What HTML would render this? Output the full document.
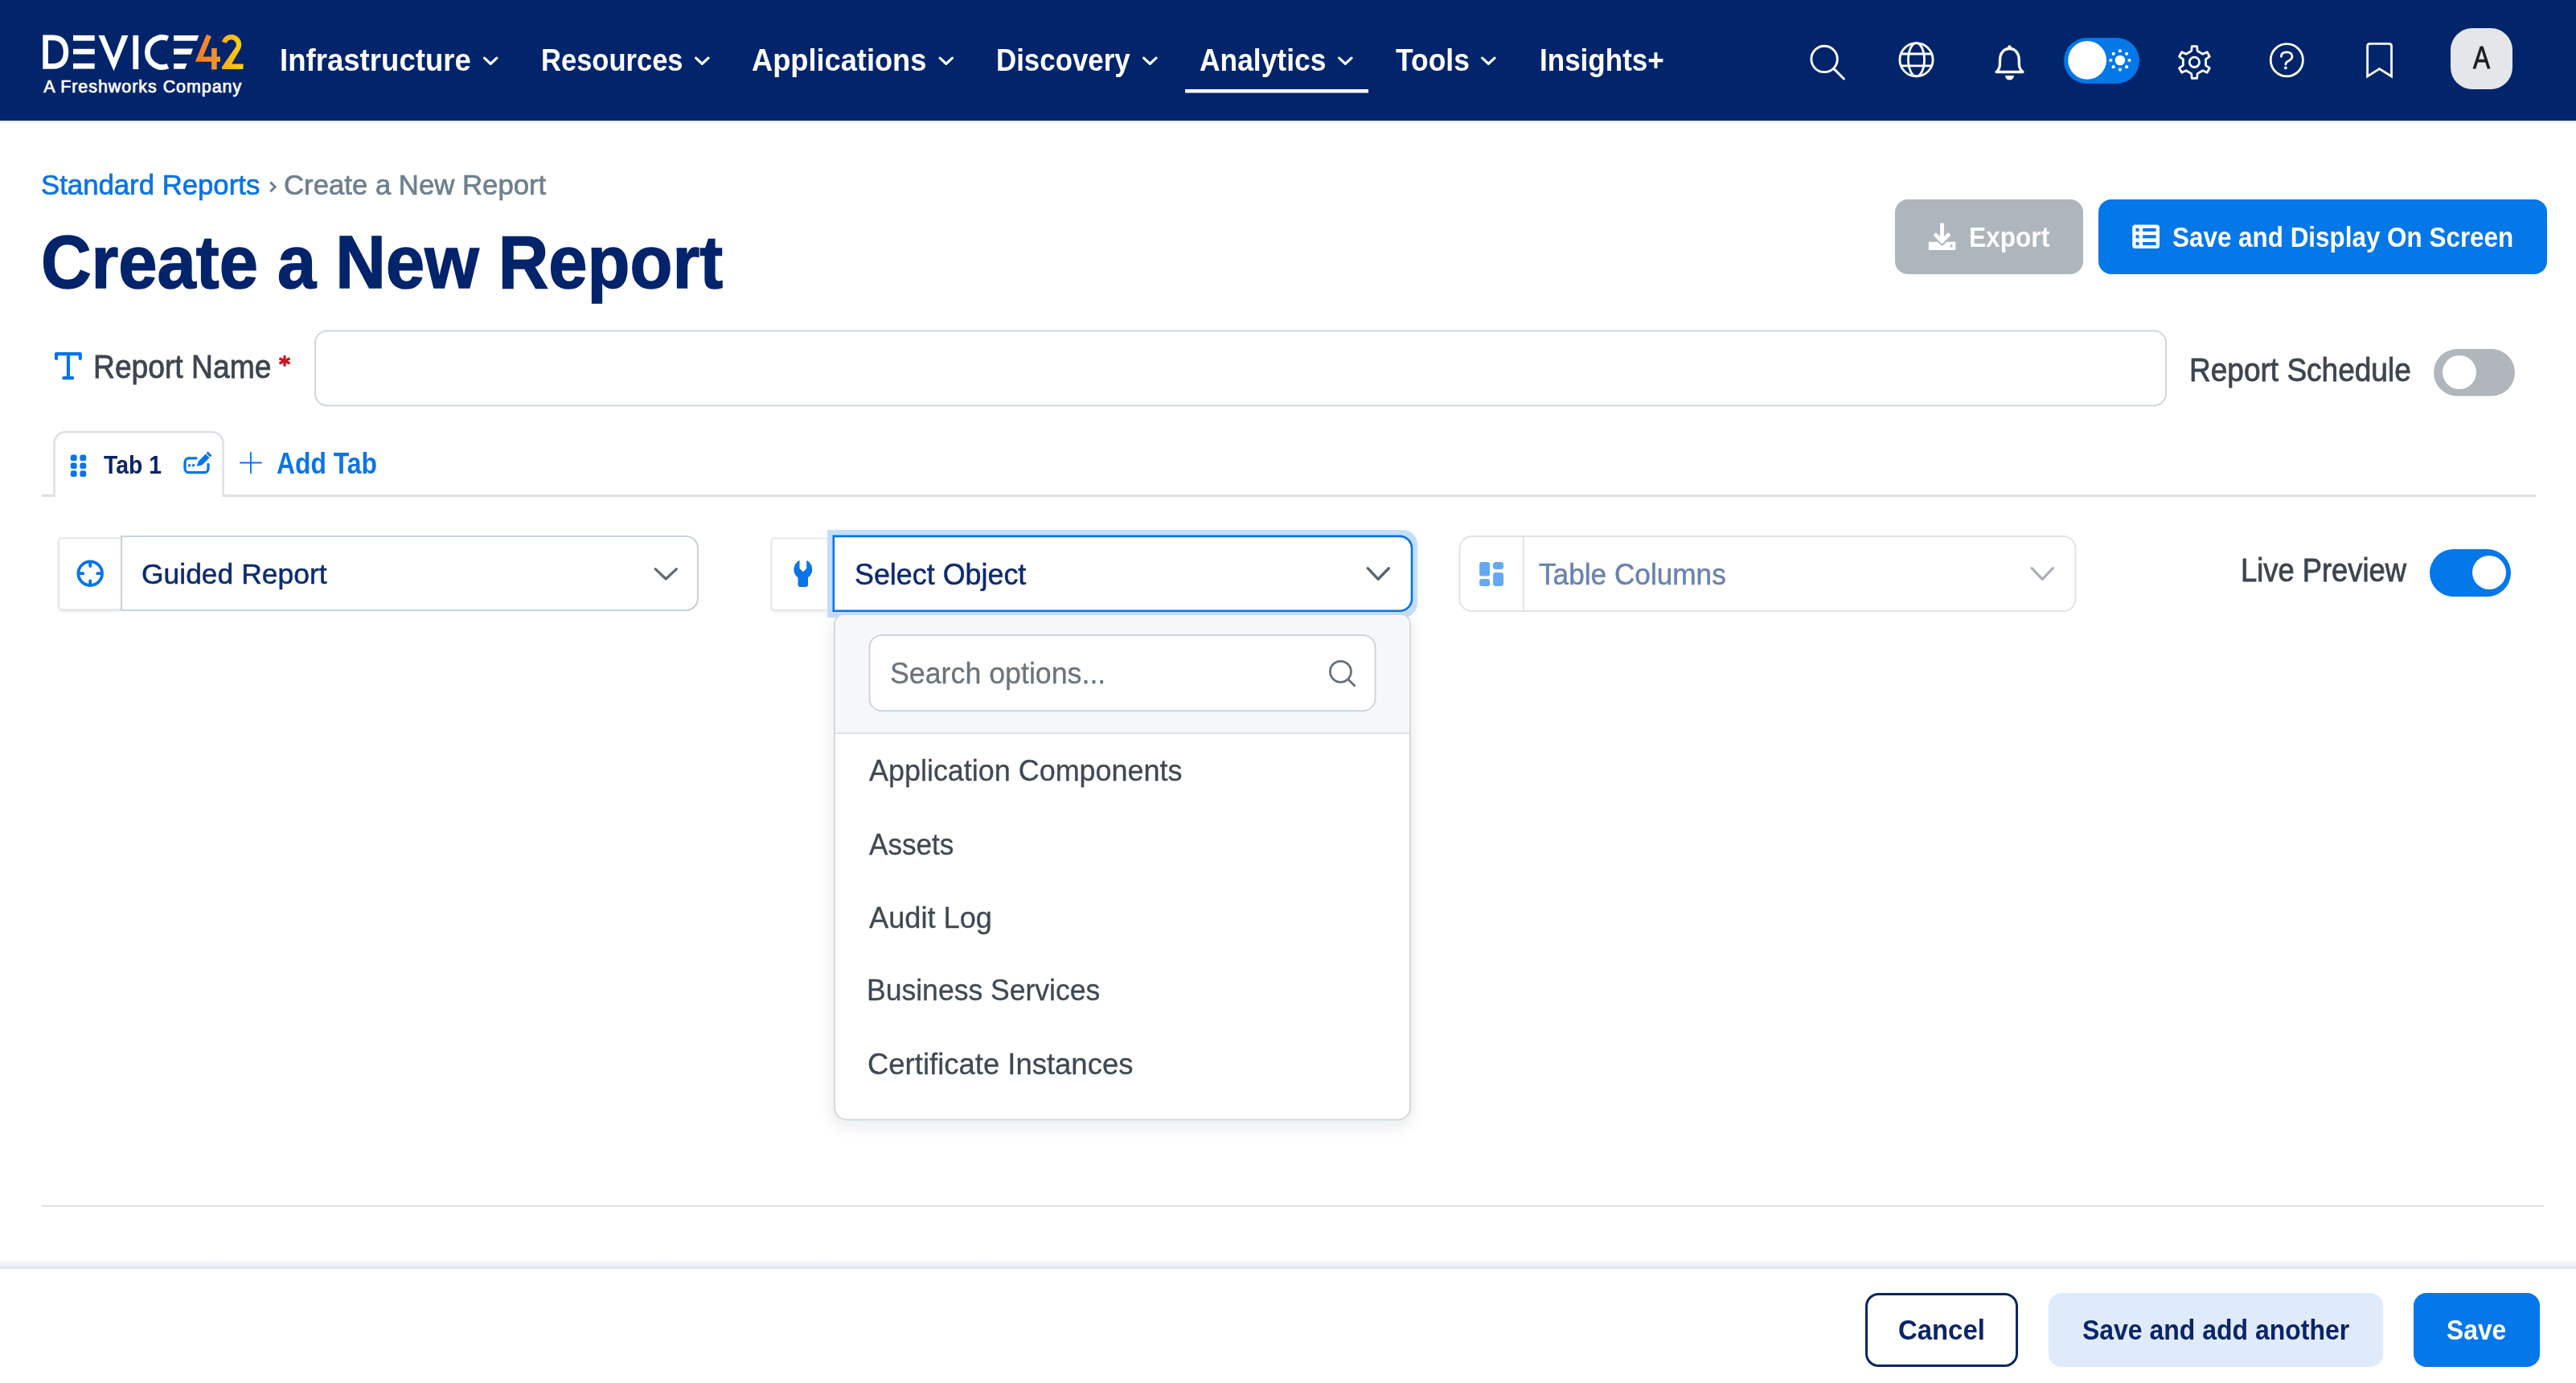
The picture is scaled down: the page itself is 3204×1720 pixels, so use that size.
<!DOCTYPE html>
<html><head><meta charset="utf-8"><title>Create a New Report</title>
<style>
html,body{margin:0;padding:0;background:#fff;width:3204px;height:1720px;overflow:hidden;}
.t{position:absolute;white-space:nowrap;line-height:normal;font-family:"Liberation Sans",sans-serif;transform-origin:0 0;}
svg{position:absolute;left:0;top:0;}
</style></head><body>
<svg width="3204" height="1720" viewBox="0 0 3204 1720">
<rect x="0" y="0" width="3204" height="150" fill="#01246b"/>
<rect x="0" y="150" width="3204" height="2" fill="#e3e6ea"/>
<defs><linearGradient id="g42" x1="242" y1="0" x2="303" y2="0" gradientUnits="userSpaceOnUse"><stop offset="0" stop-color="#f07a2c"/><stop offset="0.45" stop-color="#f4922a"/><stop offset="0.6" stop-color="#fbb01a"/><stop offset="1" stop-color="#ffd10a"/></linearGradient></defs>
<path fill="#fff" fill-rule="evenodd" d="M53.3,43.5 H66.4 C78.5,43.5 85.3,52 85.3,64.65 C85.3,77.3 78.5,85.8 66.4,85.8 H53.3 Z M59.9,50.3 H66.4 C74.3,50.3 78.8,56 78.8,64.65 C78.8,73.3 74.3,79 66.4,79 H59.9 Z"/>
<rect x="91" y="43.9" width="26.7" height="6.8" fill="#fff"/><rect x="91" y="60.8" width="26.7" height="6.7" fill="#fff"/><rect x="91" y="78.8" width="26.7" height="6.8" fill="#fff"/>
<polygon fill="#fff" points="122.4,43.9 129.8,43.9 141.5,72 151.7,43.9 159.5,43.9 141.5,88.2"/>
<rect x="165.4" y="43.9" width="6.8" height="42.2" fill="#fff"/>
<path fill="none" stroke="#fff" stroke-width="6.8" d="M208.83,47.85 A18.5,18.5 0 1 0 208.83,82.15"/>
<polygon fill="#fff" points="216,43.9 247.3,43.9 244.8,50.7 216,50.7"/><polygon fill="#fff" points="216,60.6 240,60.6 237.5,67.7 216,67.7"/><polygon fill="#fff" points="216,79 232.6,79 230,85.8 216,85.8"/>
<path fill="url(#g42)" d="M256.9,42.7 L262.9,45.2 L252.6,70.4 L263.1,70.4 L263.1,60.1 L269.7,60.1 L269.7,70.4 L274,70.4 L274,76.7 L269.7,76.7 L269.7,86.6 L263.1,86.6 L263.1,76.7 L242.8,76.7 Z"/>
<path fill="url(#g42)" d="M275.75,51.85 A12.5,12.5 0 1 1 297.94,62.67 L288.1,79.6 L302.5,79.6 L302.5,86 L276,86 L276,83.2 L292.78,59.06 A6.2,6.2 0 1 0 281.77,53.69 Z"/>
<polyline points="602.5,72.1 610.2,79.4 617.9,72.1" fill="none" stroke="#fff" stroke-width="3.2" stroke-linecap="round" stroke-linejoin="round"/>
<polyline points="865.6,72.1 873.3,79.4 881.0,72.1" fill="none" stroke="#fff" stroke-width="3.2" stroke-linecap="round" stroke-linejoin="round"/>
<polyline points="1169.1,72.1 1176.8,79.4 1184.5,72.1" fill="none" stroke="#fff" stroke-width="3.2" stroke-linecap="round" stroke-linejoin="round"/>
<polyline points="1422.6,72.1 1430.3,79.4 1438.0,72.1" fill="none" stroke="#fff" stroke-width="3.2" stroke-linecap="round" stroke-linejoin="round"/>
<polyline points="1665.6,72.1 1673.3,79.4 1681.0,72.1" fill="none" stroke="#fff" stroke-width="3.2" stroke-linecap="round" stroke-linejoin="round"/>
<polyline points="1843.6,72.1 1851.3,79.4 1859.0,72.1" fill="none" stroke="#fff" stroke-width="3.2" stroke-linecap="round" stroke-linejoin="round"/>
<rect x="1474" y="111" width="228" height="4.5" fill="#fff"/>
<circle cx="2269.1" cy="73.45" r="16.2" fill="none" stroke="#fff" stroke-width="2.9"/><line x1="2281" y1="85.6" x2="2293.4" y2="98" stroke="#fff" stroke-width="2.9" stroke-linecap="round"/>
<g fill="none" stroke="#fff" stroke-width="2.8"><circle cx="2383.5" cy="74.3" r="20.6"/><ellipse cx="2383.5" cy="74.3" rx="10" ry="20.6"/><line x1="2364" y1="67" x2="2403" y2="67"/><line x1="2364" y1="81.8" x2="2403" y2="81.8"/></g>
<path fill="none" stroke="#fff" stroke-width="3.3" stroke-linejoin="round" d="M2483,89.5 C2487.5,85.5 2487.5,82 2487.5,77 V75 C2487.5,66 2492.5,60.5 2499.4,60.5 C2506.3,60.5 2511.3,66 2511.3,75 V77 C2511.3,82 2511.3,85.5 2516,89.5 Z"/>
<path fill="#fff" d="M2494,94 H2505 A5.5,5.5 0 0 1 2494,94 Z"/><circle cx="2499.4" cy="58.5" r="2.3" fill="#fff"/>
<rect x="2567" y="47" width="94" height="57" rx="28.5" fill="#0477e9"/><circle cx="2596.1" cy="74.9" r="23.9" fill="#fff"/>
<circle cx="2636.9" cy="75" r="6.3" fill="#fff"/>
<circle cx="2648.50" cy="75.00" r="2.1" fill="#fff"/>
<circle cx="2645.10" cy="83.20" r="2.1" fill="#fff"/>
<circle cx="2636.90" cy="86.60" r="2.1" fill="#fff"/>
<circle cx="2628.70" cy="83.20" r="2.1" fill="#fff"/>
<circle cx="2625.30" cy="75.00" r="2.1" fill="#fff"/>
<circle cx="2628.70" cy="66.80" r="2.1" fill="#fff"/>
<circle cx="2636.90" cy="63.40" r="2.1" fill="#fff"/>
<circle cx="2645.10" cy="66.80" r="2.1" fill="#fff"/>
<path fill="none" stroke="#fff" stroke-width="2.8" stroke-linejoin="round" d="M2725.62,63.40 L2726.24,57.55 L2732.56,57.55 L2733.18,63.40 L2739.72,67.18 L2745.10,64.79 L2748.26,70.26 L2743.50,73.72 L2743.50,81.28 L2748.26,84.74 L2745.10,90.21 L2739.72,87.82 L2733.18,91.60 L2732.56,97.45 L2726.24,97.45 L2725.62,91.60 L2719.08,87.82 L2713.70,90.21 L2710.54,84.74 L2715.30,81.28 L2715.30,73.72 L2710.54,70.26 L2713.70,64.79 L2719.08,67.18 Z"/><circle cx="2729.4" cy="77.3" r="6.2" fill="none" stroke="#fff" stroke-width="2.8"/>
<circle cx="2844.3" cy="74.7" r="20.1" fill="none" stroke="#fff" stroke-width="2.8"/>
<path fill="none" stroke="#fff" stroke-width="2.8" stroke-linecap="round" d="M2837.3,70.3 C2837.3,66.5 2840.5,64.8 2844.3,64.8 C2848.3,64.8 2851,67 2851,70.3 C2851,73.5 2848.5,74.8 2846,76 C2843.8,77.2 2842.8,78.2 2842.8,80"/><circle cx="2842.8" cy="84.4" r="1.9" fill="#fff"/>
<path fill="none" stroke="#fff" stroke-width="2.8" stroke-linejoin="miter" d="M2944.6,95 V57.5 Q2944.6,54.4 2947.7,54.4 H2971.4 Q2974.5,54.4 2974.5,57.5 V95 L2959.5,85.6 Z"/>
<rect x="3048" y="35" width="77" height="76" rx="27" fill="#e4e6ea"/>
<polyline points="336.3,226.6 342.2,232.45 336.3,238.3" fill="none" stroke="#6e808f" stroke-width="3"/>
<rect x="2357" y="248" width="234" height="93" rx="16" fill="#adb6bd"/>
<g fill="#fff"><rect x="2413.1" y="277.5" width="4.8" height="21"/><polyline points="2406.2,290.8 2415.5,300.1 2424.8,290.8" fill="none" stroke="#fff" stroke-width="4.8" stroke-linejoin="miter"/><path d="M2398.8,300.7 H2409.8 L2415.5,306.1 L2421.2,300.7 H2432.3 V311.1 H2398.8 Z"/></g><circle cx="2427.1" cy="305.9" r="1.6" fill="#adb6bd"/>
<rect x="2610" y="248" width="558" height="93" rx="16" fill="#0477e9"/>
<rect x="2652.2" y="279.5" width="33.8" height="29.6" rx="3.5" fill="#fff"/>
<rect x="2656.5" y="283.8" width="4" height="4.1" fill="#0477e9"/><rect x="2665.1" y="283.8" width="16.5" height="4.1" fill="#0477e9"/>
<rect x="2656.5" y="292.3" width="4" height="4.1" fill="#0477e9"/><rect x="2665.1" y="292.3" width="16.5" height="4.1" fill="#0477e9"/>
<rect x="2656.5" y="301" width="4" height="4.1" fill="#0477e9"/><rect x="2665.1" y="301" width="16.5" height="4.1" fill="#0477e9"/>
<path fill="none" stroke="#0a74e8" stroke-width="4.2" stroke-linecap="round" stroke-linejoin="round" d="M70,446 V440.2 H99.8 V446 M85,440.2 V470.2 M79.3,470.2 H90.2"/>
<g stroke="#cf1020" stroke-width="3.2" stroke-linecap="butt"><line x1="354" y1="442.1" x2="354" y2="455.7"/><line x1="347.5" y1="445.8" x2="360.5" y2="452"/><line x1="347.5" y1="452" x2="360.5" y2="445.8"/></g>
<rect x="392" y="411.5" width="2302" height="93" rx="15" fill="#fff" stroke="#cfd6dd" stroke-width="2"/>
<rect x="3027" y="434" width="101" height="58.5" rx="29.25" fill="#b1b6bc"/><circle cx="3059" cy="463" r="21" fill="#fff"/>
<rect x="52" y="615" width="3102" height="3" fill="#dce0e5"/>
<path fill="#fff" stroke="#dde1e6" stroke-width="2.6" d="M67.5,618 V551 A14,14 0 0 1 81.5,537.3 H263.5 A14,14 0 0 1 277.5,551 V618"/>
<rect x="87.8" y="565.6" width="7.8" height="7.6" rx="2.5" fill="#0a74e8"/>
<rect x="87.8" y="575.5" width="7.8" height="7.6" rx="2.5" fill="#0a74e8"/>
<rect x="87.8" y="585.3" width="7.8" height="7.6" rx="2.5" fill="#0a74e8"/>
<rect x="99.4" y="565.6" width="7.8" height="7.6" rx="2.5" fill="#0a74e8"/>
<rect x="99.4" y="575.5" width="7.8" height="7.6" rx="2.5" fill="#0a74e8"/>
<rect x="99.4" y="585.3" width="7.8" height="7.6" rx="2.5" fill="#0a74e8"/>
<path fill="none" stroke="#0a74e8" stroke-width="3.3" stroke-linecap="round" d="M244,569.9 H235 A5,5 0 0 0 230,574.9 V582.7 A5,5 0 0 0 235,587.7 H254 A5,5 0 0 0 259,582.7 V577.5"/>
<circle cx="235.6" cy="578.8" r="1.7" fill="#0a74e8"/><circle cx="240.6" cy="578.8" r="1.7" fill="#0a74e8"/>
<path fill="#0a74e8" d="M244.5,580 L247,573.5 L258.7,561.5 L263.5,566.5 L251.5,578.3 Z"/><line x1="255.6" y1="563.6" x2="261.4" y2="569.4" stroke="#fff" stroke-width="1.3"/>
<g stroke="#0a74e8" stroke-width="1.9" stroke-linecap="round"><line x1="311.9" y1="563" x2="311.9" y2="588"/><line x1="299" y1="575.5" x2="325" y2="575.5"/></g>
<defs><filter id="sh" x="-20%" y="-20%" width="140%" height="150%"><feDropShadow dx="0" dy="1.5" stdDeviation="1.5" flood-color="#000" flood-opacity="0.12"/></filter><filter id="sh2" x="-10%" y="-10%" width="120%" height="120%"><feDropShadow dx="0" dy="6" stdDeviation="9" flood-color="#1b2a3c" flood-opacity="0.10"/></filter></defs>
<rect x="73" y="669" width="78" height="89" rx="4" fill="#fff" stroke="#dfe3e8" stroke-width="1.6" filter="url(#sh)"/>
<path fill="#fff" stroke="#cbd3dc" stroke-width="2.2" d="M151,667 H853 A15,15 0 0 1 868,682 V744 A15,15 0 0 1 853,759 H151 Z"/>
<g fill="none" stroke="#0a74e8" stroke-width="3.8" stroke-linecap="round"><circle cx="112.2" cy="713.2" r="14.8"/><line x1="112.2" y1="699" x2="112.2" y2="704"/><line x1="112.2" y1="722.4" x2="112.2" y2="727.4"/><line x1="98" y1="713.2" x2="103.3" y2="713.2"/><line x1="121.2" y1="713.2" x2="126.4" y2="713.2"/></g>
<polyline points="815.1,707.6 828.2,720.0 841.4,707.6" fill="none" stroke="#5f6b76" stroke-width="3.2" stroke-linecap="round" stroke-linejoin="round"/>
<rect x="959.5" y="669.5" width="72" height="89" rx="4" fill="#fff" stroke="#dfe3e8" stroke-width="1.6" filter="url(#sh)"/>
<path fill="#c4defc" d="M1029,659 H1745 A18,18 0 0 1 1763,677 V750 A18,18 0 0 1 1745,768 H1029 Z"/>
<path fill="#fff" stroke="#0a73e6" stroke-width="2.6" d="M1036.8,666.9 H1741 A15,15 0 0 1 1756,681.9 V744.7 A15,15 0 0 1 1741,759.7 H1036.8 Z"/>
<path fill="#0a74e8" d="M994.5,696.8 V707 L998.9,711.2 L1003.2,707 V696.8 A12.8,12.8 0 0 1 1005,718.5 V727 A3,3 0 0 1 1002,730 H995.5 A3,3 0 0 1 992.5,727 V718.5 A12.8,12.8 0 0 1 994.5,696.8 Z"/>
<polyline points="1701.2,706.7 1714.2,720.3 1727.3,706.7" fill="none" stroke="#5a6570" stroke-width="3.4" stroke-linecap="round" stroke-linejoin="round"/>
<rect x="1815.5" y="667" width="766" height="93" rx="15" fill="#fff" stroke="#dfe3e8" stroke-width="2"/><rect x="1894" y="668" width="2" height="91" fill="#e3e7eb"/>
<g fill="#64a9f0"><rect x="1840.1" y="699" width="13" height="17.6" rx="3.2"/><rect x="1857.1" y="699" width="12.9" height="8.9" rx="3.2"/><rect x="1840.1" y="720" width="13" height="8.9" rx="3.2"/><rect x="1857.1" y="712" width="12.9" height="16.9" rx="3.2"/></g>
<polyline points="2527.1,706.6 2540.2,720.4 2553.4,706.6" fill="none" stroke="#a9b0b7" stroke-width="3.2" stroke-linecap="round" stroke-linejoin="round"/>
<rect x="3022" y="683" width="101" height="59" rx="29.5" fill="#0477e9"/><circle cx="3096" cy="712" r="21" fill="#fff"/>
<path fill="#fff" stroke="#d3d9df" stroke-width="2" filter="url(#sh2)" d="M1038,776 A12,12 0 0 1 1050,764 H1742 A12,12 0 0 1 1754,776 V1377.5 A15,15 0 0 1 1739,1392.5 H1053 A15,15 0 0 1 1038,1377.5 Z"/>
<path fill="#f6f7f9" d="M1039,776 A11,11 0 0 1 1050,765 H1742 A11,11 0 0 1 1753,776 V911 H1039 Z"/><rect x="1039" y="911" width="714" height="2" fill="#dde1e6"/>
<rect x="1081.5" y="790" width="629" height="94" rx="15" fill="#fff" stroke="#cfd5dc" stroke-width="2"/>
<circle cx="1667.4" cy="835.3" r="13" fill="none" stroke="#65717d" stroke-width="2.8"/><line x1="1677" y1="845" x2="1685.5" y2="853.4" stroke="#65717d" stroke-width="2.8"/>
<rect x="52" y="1499" width="3112" height="2" fill="#dbdfe4"/>
<defs><linearGradient id="fsh" x1="0" y1="0" x2="0" y2="1"><stop offset="0" stop-color="#e6e9f0" stop-opacity="0"/><stop offset="0.5" stop-color="#eef0f5" stop-opacity="0.8"/><stop offset="1" stop-color="#dfe2ea" stop-opacity="1"/></linearGradient></defs>
<rect x="0" y="1566" width="3204" height="12" fill="url(#fsh)"/><rect x="0" y="1578" width="3204" height="142" fill="#fff"/>
<rect x="2321.5" y="1609.5" width="187" height="89" rx="15" fill="#fff" stroke="#0b2566" stroke-width="3"/>
<rect x="2548" y="1608" width="416" height="92" rx="16" fill="#dfeafb"/>
<rect x="3002" y="1608" width="157" height="92" rx="16" fill="#0477e9"/>
</svg>
<div class="t" style="left:347.57px;top:52.00px;font-size:39.27px;font-weight:700;color:#ffffff;transform:scaleX(0.9317);">Infrastructure</div>
<div class="t" style="left:672.80px;top:52.00px;font-size:39.27px;font-weight:700;color:#ffffff;transform:scaleX(0.8793);">Resources</div>
<div class="t" style="left:935.08px;top:52.00px;font-size:39.27px;font-weight:700;color:#ffffff;transform:scaleX(0.9227);">Applications</div>
<div class="t" style="left:1238.78px;top:52.00px;font-size:39.27px;font-weight:700;color:#ffffff;transform:scaleX(0.8877);">Discovery</div>
<div class="t" style="left:1492.10px;top:52.00px;font-size:39.27px;font-weight:700;color:#ffffff;transform:scaleX(0.9012);">Analytics</div>
<div class="t" style="left:1735.55px;top:52.00px;font-size:39.27px;font-weight:700;color:#ffffff;transform:scaleX(0.9023);">Tools</div>
<div class="t" style="left:1914.77px;top:52.00px;font-size:39.27px;font-weight:700;color:#ffffff;transform:scaleX(0.8922);">Insights+</div>
<div class="t" style="left:54.15px;top:95.70px;font-size:21.38px;font-weight:400;color:#ffffff;transform:scaleX(1.0000);-webkit-text-stroke:0.7px #ffffff;letter-spacing:1.008px;">A Freshworks Company</div>
<div class="t" style="left:3075.60px;top:50.10px;font-size:39.13px;font-weight:400;color:#1c1c1c;transform:scaleX(0.8074);-webkit-text-stroke:0.9px #1c1c1c;">A</div>
<div class="t" style="left:50.97px;top:210.00px;font-size:35.20px;font-weight:400;color:#0b73e6;transform:scaleX(0.9872);-webkit-text-stroke:0.7px #0b73e6;">Standard Reports</div>
<div class="t" style="left:353.44px;top:210.10px;font-size:35.64px;font-weight:400;color:#6e808f;transform:scaleX(0.9749);-webkit-text-stroke:0.7px #6e808f;">Create a New Report</div>
<div class="t" style="left:50.90px;top:273.10px;font-size:92.95px;font-weight:700;color:#03236b;transform:scaleX(0.9330);-webkit-text-stroke:1.5px #03236b;">Create a New Report</div>
<div class="t" style="left:2448.90px;top:274.90px;font-size:35.64px;font-weight:700;color:#ffffff;transform:scaleX(0.8878);">Export</div>
<div class="t" style="left:2702.12px;top:274.90px;font-size:35.64px;font-weight:700;color:#ffffff;transform:scaleX(0.8817);">Save and Display On Screen</div>
<div class="t" style="left:115.57px;top:432.90px;font-size:40.44px;font-weight:400;color:#3d4550;transform:scaleX(0.9208);-webkit-text-stroke:0.8px #3d4550;">Report Name</div>
<div class="t" style="left:2722.50px;top:437.00px;font-size:40.73px;font-weight:400;color:#3d4550;transform:scaleX(0.9091);-webkit-text-stroke:0.8px #3d4550;">Report Schedule</div>
<div class="t" style="left:128.97px;top:560.90px;font-size:31.27px;font-weight:700;color:#0a2465;transform:scaleX(0.9061);">Tab 1</div>
<div class="t" style="left:343.66px;top:555.00px;font-size:37.82px;font-weight:700;color:#0b75e8;transform:scaleX(0.8419);">Add Tab</div>
<div class="t" style="left:176.00px;top:694.00px;font-size:35.35px;font-weight:400;color:#0d2a6e;transform:scaleX(1.0033);-webkit-text-stroke:0.5px #0d2a6e;">Guided Report</div>
<div class="t" style="left:1062.53px;top:693.60px;font-size:36.51px;font-weight:400;color:#0d2a6e;transform:scaleX(0.9826);-webkit-text-stroke:0.5px #0d2a6e;">Select Object</div>
<div class="t" style="left:1913.52px;top:693.60px;font-size:36.51px;font-weight:400;color:#6a83ac;transform:scaleX(0.9642);-webkit-text-stroke:0.5px #6a83ac;">Table Columns</div>
<div class="t" style="left:2787.05px;top:686.00px;font-size:40.73px;font-weight:400;color:#3d4550;transform:scaleX(0.8922);-webkit-text-stroke:0.8px #3d4550;">Live Preview</div>
<div class="t" style="left:1106.53px;top:817.00px;font-size:36.36px;font-weight:400;color:#6b747d;transform:scaleX(0.9832);-webkit-text-stroke:0.3px #6b747d;">Search options...</div>
<div class="t" style="left:1080.95px;top:938.00px;font-size:36.36px;font-weight:400;color:#3f4954;transform:scaleX(0.9880);-webkit-text-stroke:0.3px #3f4954;">Application Components</div>
<div class="t" style="left:1080.93px;top:1028.70px;font-size:37.38px;font-weight:400;color:#3f4954;transform:scaleX(0.9387);-webkit-text-stroke:0.3px #3f4954;">Assets</div>
<div class="t" style="left:1080.95px;top:1120.80px;font-size:36.80px;font-weight:400;color:#3f4954;transform:scaleX(0.9840);-webkit-text-stroke:0.3px #3f4954;">Audit Log</div>
<div class="t" style="left:1078.01px;top:1211.00px;font-size:36.36px;font-weight:400;color:#3f4954;transform:scaleX(0.9772);-webkit-text-stroke:0.3px #3f4954;">Business Services</div>
<div class="t" style="left:1079.23px;top:1301.60px;font-size:37.24px;font-weight:400;color:#3f4954;transform:scaleX(0.9795);-webkit-text-stroke:0.3px #3f4954;">Certificate Instances</div>
<div class="t" style="left:2361.10px;top:1634.00px;font-size:35.20px;font-weight:700;color:#0b2566;transform:scaleX(0.9345);">Cancel</div>
<div class="t" style="left:2589.59px;top:1634.00px;font-size:35.20px;font-weight:700;color:#0b2566;transform:scaleX(0.9083);">Save and add another</div>
<div class="t" style="left:3043.10px;top:1634.00px;font-size:35.20px;font-weight:700;color:#ffffff;transform:scaleX(0.9034);">Save</div>
</body></html>
